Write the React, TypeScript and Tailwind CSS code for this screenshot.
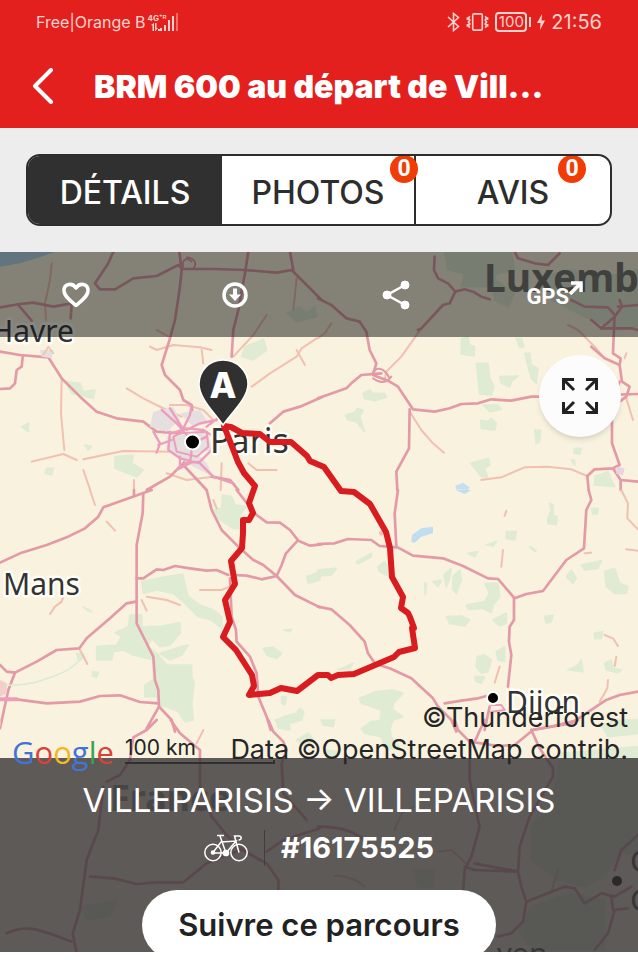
import React from "react";

const MAJOR = "#e39aa6";
const MINOR = "#f2c0b0";
const CITY = "#ec9dbb";
const FOREST = "#dfebd3";

type TileProps = {
  x: number;
  y: number;
  forest?: string[];
  major?: string[];
  minor?: string[];
  children?: React.ReactNode;
};

function Tile({ x, y, forest = [], major = [], minor = [], children }: TileProps) {
  return (
    <g transform={`translate(${x} ${y}) scale(0.3333)`} fill="none" strokeLinejoin="round" strokeLinecap="round">
      {forest.map((d) => (
        <path key={d} d={d} fill={FOREST} stroke={FOREST} strokeWidth="5" />
      ))}
      {minor.map((d) => (
        <path key={d} d={d} stroke={MINOR} strokeWidth="6" />
      ))}
      {major.map((d) => (
        <path key={d} d={d} stroke={MAJOR} strokeWidth="8" />
      ))}
      {children}
    </g>
  );
}

function MapCanvas() {
  return (
    <svg
      className="absolute inset-0 h-full w-full bg-[#f8f2df]"
      viewBox="0 252 638 700"
      preserveAspectRatio="xMidYMin slice"
      fontFamily="'Noto Sans', 'Open Sans', sans-serif"
      aria-hidden="true"
    >
      <rect x="-200" y="252" width="1038" height="700" fill="#f8f2df" />

      <Tile
        x={0}
        y={250}
        forest={[
          "M735 290L790 268L800 300L760 330L725 320Z",
          "M345 620L400 615L395 640L430 660L410 680L345 655Z",
          "M195 395L240 400L250 425L285 420L280 445L215 430Z",
          "M860 190L900 170L920 190L945 170L950 200L890 215Z",
          "M65 530L85 520L85 545Z",
          "M140 655L160 655L155 675L135 670Z",
          "M255 585L275 590L265 600Z",
        ]}
        minor={[
          "M155 40L150 90L135 160L138 210",
          "M95 635L190 612L230 630",
          "M185 385L183 490L193 600",
          "M250 628L370 603L520 605",
          "M380 415L430 445L500 480L545 500",
          "M450 290L470 300L520 285L600 292L635 300",
          "M605 300L610 340",
          "M700 320L760 255L800 195",
          "M755 410L810 370L890 320L905 295L950 265",
          "M890 300L915 345",
          "M250 660L270 718",
          "M402 690L402 720",
          "M510 465L560 465L610 480L640 510",
          "M745 640L770 660L830 660",
          "M665 640L662 720",
          "M500 670L560 690L640 680",
          "M470 240L510 262",
          "M890 85L880 180",
        ]}
        major={[
          "M340 5L325 40L285 100L300 118L345 118L400 85L470 78L535 45L548 57L640 57L735 60L830 68L875 60L910 95L965 150",
          "M0 172L60 162L100 158L160 170L215 160L212 205",
          "M55 165L95 212",
          "M538 5L545 60L540 110L525 210L510 265L485 345L495 375L540 420L550 450L575 465L578 495",
          "M745 5L735 70L715 180L700 240L695 320",
          "M870 5L880 60",
          "M0 305L60 315L145 322L185 385L240 440L290 485L350 505L430 515L470 545L540 550",
          "M68 322L65 350L50 360L45 400L30 415L0 417",
          "M810 520L850 485L900 470L965 442",
          "M440 720L510 680L550 640L575 610",
          "M550 645L620 720",
          "M635 680L690 690L715 720",
        ]}
      >
        <path d="M-10 0H180L120 22L60 40L-10 52Z" fill="#b4d8ee" />
        <path d="M460 485L520 470L540 510L500 545L450 530ZM540 490L600 480L625 520L580 530ZM500 560L620 545L640 600L590 610L620 640L640 680L580 650L500 600ZM120 300L160 300L155 325L125 320Z" fill="#e6dfe0" />
        <path d="M575 35C560 20 545 30 550 50M560 22C590 25 590 45 580 55" stroke={MAJOR} strokeWidth="5" />
        <path d="M130 315L145 290L160 310" stroke={MINOR} strokeWidth="5" />
        <path
          d="M485 480L530 520L560 555M510 475L545 530M460 545L480 580L470 608M475 585L515 570M510 545L505 600L540 625L600 640M515 550L560 535L610 540L640 560L635 600L600 635L550 640M560 540L600 520L650 510M575 465L570 495L545 545M600 640L640 680L700 700M620 530L660 500M540 620L540 650M575 600L570 640L530 660M620 560L600 570"
          stroke={CITY}
          strokeWidth="7"
        />
        <path d="M520 560L540 550L620 545L625 590L590 620L530 605Z" stroke={CITY} strokeWidth="6" />
      </Tile>

      <Tile
        x={318}
        y={250}
        forest={[
          "M380 5H580L590 60L540 70L510 110L430 110L440 70L390 60Z",
          "M520 80L590 130L570 170L530 150Z",
          "M430 265L450 260L455 285L470 290L468 318L430 312Z",
          "M475 340L510 340L515 385L528 410L520 435L485 432Z",
          "M595 265L610 265L618 290L605 292Z",
          "M620 310L635 310L640 345L660 355L655 400L640 385Z",
          "M545 380L600 378L580 395L575 410L550 400Z",
          "M135 430L155 420L165 430L200 430L205 442L170 452L140 445Z",
          "M82 495L110 488L118 475L135 480L125 500L140 545L115 515L90 510Z",
          "M495 465L540 465L550 478L515 485Z",
          "M488 510L510 515L520 505L535 520L530 540L490 535Z",
          "M650 540L668 540L665 575L655 580Z",
          "M770 595L790 595L785 612L768 610Z",
          "M458 640L512 625L515 645L500 655L510 685L490 680Z",
          "M830 680L870 665L880 690L890 710L830 705Z",
          "M760 630L770 630L770 645Z",
          "M660 80L760 60L860 80L960 60V230L900 240L800 200L700 150Z",
        ]}
        minor={[
          "M40 220L20 250L0 265",
          "M310 235L250 320L205 365L200 390",
          "M275 485L310 540L345 580L378 608",
          "M490 690L550 682L620 652L690 650L760 658L808 678",
          "M925 445L945 510",
          "M750 225L780 240L830 290L860 325",
          "M925 310L920 325",
        ]}
        major={[
          "M350 20L348 60L360 85L390 100L412 125L440 118L465 125L490 140L515 148",
          "M412 125L395 160L375 165L310 235L300 240",
          "M0 145L40 165L85 205L125 215L145 245L155 300L175 340L165 375L210 392L240 410L270 455L285 478L350 485L395 475L430 462L480 460L520 448L580 452L640 440L700 440L960 432",
          "M0 445L85 415L100 400L130 375L190 370",
          "M275 478L273 595L235 665L238 720",
          "M590 5L600 25L650 40L690 45L725 10",
          "M760 150L800 170L870 172L890 195L885 310L908 325L905 345L912 395L935 410L925 440L905 455",
          "M820 290L860 325L905 345",
          "M905 150L912 170L890 200L850 235M820 210L850 235L940 235L960 240M900 170L960 165",
          "M905 395L882 460L882 580L905 645L885 655L830 658L808 678L812 720",
          "M885 655L908 690L960 695M908 690V720",
        ]}
      >
        <path d="M162 372C175 345 200 355 215 385M165 385C185 400 205 400 220 380" stroke={MAJOR} strokeWidth="6" />
        <path d="M412 708L435 698L455 712L450 720L415 718Z" fill="#c4dff0" />
        <path d="M895 650L920 655L915 675L895 672Z" fill="#e9d3df" />
      </Tile>

      <Tile
        x={0}
        y={490}
        forest={[
          "M668 15L695 20L705 45L738 50L720 75L730 115L700 115L660 90L640 60L665 55Z",
          "M425 275L500 260L548 252L555 285L565 320L600 345L640 360L665 380L665 415L635 390L595 380L560 345L520 310L470 300L430 310Z",
          "M290 470L350 465L365 440L345 428L385 410L390 375L425 375L425 410L450 415L460 440L440 470L470 490L500 525H575V560L582 580L575 640L580 690L555 695L535 665L500 650L485 650L470 620L435 620L435 585L460 570L460 510L400 495L370 480L340 485L335 510H290Z",
          "M440 410L480 410L540 398L540 430L510 465L480 470L450 440Z",
          "M480 490L545 470L565 465L545 495L510 510Z",
          "M790 475L820 472L845 490L830 505L800 495Z",
          "M850 420L875 418L870 425Z",
          "M920 260L960 245V270L925 280Z",
          "M830 690L850 680L890 670L900 655L912 665L905 690L870 700L835 715Z",
          "M845 620L860 620L855 645L845 640Z",
          "M278 545L295 548L290 562L278 558Z",
          "M250 350L275 365L260 360Z",
          "M230 490L250 490L255 505L235 510Z",
        ]}
        minor={[
          "M270 0L285 45",
          "M320 95L345 122",
          "M150 372L165 350L185 335L190 320",
          "M440 320L500 330L540 345",
          "M600 300L665 300L690 290",
          "M240 480L262 522",
          "M640 30L650 55",
          "M425 330L440 362",
        ]}
        major={[
          "M455 0L405 18L310 52L295 80L255 115L200 142L140 165L65 188L0 218",
          "M402 0L402 18",
          "M430 10L428 70L410 165L410 400L435 450L460 500L465 570L475 600L477 650L440 715",
          "M477 650L515 690L525 725",
          "M410 265L430 265L470 238L490 240L525 228L570 235L620 242L650 240L685 255",
          "M408 335L380 340L330 385L260 445L238 475L170 480L110 515L45 548L25 600L0 715",
          "M0 525L20 545L45 548",
          "M0 628L50 628L140 640L240 635L300 618L360 616L420 636L475 640",
          "M620 0L635 60L665 120L720 175L760 210L790 225L830 258L885 315L960 352",
          "M710 0L745 45L770 75L800 97L840 98L870 120L895 152L930 167L965 163",
          "M893 152L858 190L845 225L830 258L785 268L740 257L700 255",
          "M690 265L695 380L708 420L710 455L750 500L770 550L775 620L800 680L812 720",
        ]}
      >
        <path d="M0 585C90 590 130 570 170 555C200 545 220 530 240 510" stroke="#dcead8" strokeWidth="5" />
        <path d="M0 570L20 580L20 610L0 620Z" fill="#f3cfc9" />
        <path d="M0 628H50" stroke={CITY} strokeWidth="12" />
      </Tile>

      <Tile
        x={318}
        y={490}
        forest={[
          "M0 240L55 235L40 255L0 258Z",
          "M115 215L160 190L160 200L120 222Z",
          "M180 230L200 215L215 240L215 260L185 245Z",
          "M378 255L400 235L395 265L385 290Z",
          "M405 260L425 240L430 270L415 310L405 300Z",
          "M320 280L325 280L322 315Z",
          "M345 275L370 270L360 290Z",
          "M385 380L430 378L455 390L440 408L395 400Z",
          "M445 345L500 335L515 310L500 280L540 280L545 320L525 345L520 368L495 355L450 358Z",
          "M525 390L565 370L565 400L545 408Z",
          "M565 125L595 125L590 150L565 145Z",
          "M505 165L535 155L525 168Z",
          "M450 190L480 185L470 200Z",
          "M690 85L700 60L695 40L705 45L705 75L718 80L715 105L690 100Z",
          "M820 55L840 55L838 72L825 72Z",
          "M745 260L760 240L775 265L765 280Z",
          "M790 225L850 212L840 235L800 240Z",
          "M860 245L890 235L905 280L930 290L925 310L890 310L865 290Z",
          "M635 170L655 180L650 185Z",
          "M680 380L705 375L700 395L685 400Z",
          "M830 430L855 425L850 445L830 445Z",
          "M860 520L880 510L885 535L910 540L900 548L865 540Z",
          "M478 500L500 495L520 510L510 545L490 550L475 530Z",
          "M535 485L560 470L560 515L540 510Z",
          "M470 560L500 560L490 580L475 575Z",
          "M125 625L175 605L225 600L255 610L225 640L225 660L255 680L225 690L215 720L185 700L190 660L130 640Z",
          "M60 540L105 520L95 535Z",
          "M750 540L780 525L790 510L795 545Z",
          "M10 690L50 690L45 710L15 705Z",
        ]}
        minor={[
          "M555 180L550 230",
          "M910 0L930 40L928 85L960 118",
          "M925 178L960 182",
          "M800 190L820 188",
          "M860 435L885 445L900 468",
          "M895 500L890 528",
          "M870 570L868 595L845 635",
          "M545 530L530 578",
          "M560 78L565 62",
        ]}
        major={[
          "M240 0L230 70L235 170L285 197L375 205L435 228L510 265L540 267L590 325L625 312L675 303L745 210L798 175L805 60L820 30L812 0",
          "M588 325L588 390L575 410L573 455L580 495L570 590",
          "M0 162L50 160L90 147L160 150L185 168L235 172",
          "M0 350L40 358L95 405L140 455L150 490L172 522L215 535L280 565L345 625L360 650",
          "M380 640L430 632L480 625L530 612",
          "M360 650L400 690L415 725",
          "M515 650L500 720",
          "M960 605L905 615L865 630L820 660L760 700L640 720",
        ]}
      >
        <path d="M282 135L310 115L345 110L345 130L310 140L290 158L280 155ZM412 0H460L440 12Z" fill="#c0def0" />
        <path d="M520 645L550 645L560 660L520 665" stroke={CITY} strokeWidth="6" />
        <circle cx="190" cy="130" r="7" fill={MINOR} />
      </Tile>

      <Tile
        x={0}
        y={720}
        forest={["M825 0L865 0L870 30L840 25Z", "M890 60L925 40L940 60L920 80Z", "M250 560L350 540L330 590L260 600Z"]}
        minor={["M610 30L590 70", "M0 0L0 15"]}
        major={[
          "M470 0L440 30L400 52L390 120L360 165L320 185",
          "M512 0L540 40L600 90L600 200L635 290L680 345L720 385L780 420",
          "M805 0L820 35L850 65L860 90L845 130L850 220L920 300",
          "M310 200L295 330L260 420L240 570L218 640L230 700",
          "M270 470L340 475L410 492L470 487L550 487L620 430L720 390",
          "M800 395L850 360L960 325",
          "M720 385L800 430L835 480L835 520",
          "M20 640C80 610 120 630 215 665",
        ]}
      />

      <Tile
        x={318}
        y={720}
        forest={[
          "M130 25L160 5L210 0L220 50L250 90L200 85L190 50L140 40Z",
          "M640 320L700 250L730 100L960 80V400L900 400L860 470L800 500L720 480L640 420Z",
          "M850 15L900 0L960 0V40L870 50Z",
          "M20 90L60 95L55 110H25Z",
          "M640 560L760 520L860 540V690H640L600 620Z",
          "M290 450L350 450L345 500L300 500Z",
        ]}
        minor={[
          "M230 330L250 280L290 260",
          "M360 395L400 390L450 435",
          "M50 468C80 465 120 480 140 500",
          "M700 515L720 450",
        ]}
        major={[
          "M410 0L420 30L455 65L455 180L485 320L460 410L440 450L435 520",
          "M500 0L470 65M455 65L540 78L590 75L645 30L700 20L780 0",
          "M640 30L665 85L705 145L705 170L635 290L605 380L600 455L470 430",
          "M440 440L470 450L600 455L610 500L625 545L615 605L580 640L540 650",
          "M625 545L700 515L740 500L770 505L800 550L850 520L890 530L940 500",
          "M960 345L910 390L890 450",
          "M880 530L885 570L930 565M890 570L870 640L830 690",
          "M0 320C80 320 120 340 150 370",
        ]}
      />

      <g fill="#333" stroke="#fffdf6" strokeWidth="5" strokeLinejoin="round" paintOrder="stroke">
        <text x="-9" y="342" fontSize="30">Havre</text>
        <text x="3" y="595" fontSize="30">Mans</text>
        <text x="210" y="453" fontSize="34">Paris</text>
        <text x="506" y="713" fontSize="30">Dijon</text>
      </g>
      <g fill="#444">
        <text x="630" y="872" fontSize="31">G</text>
        <text x="630" y="911" fontSize="31">G</text>
        <text x="497" y="964" fontSize="29">yon</text>
      </g>
      <text x="484" y="292" fontSize="39" fontWeight="700" fill="#70706e">Luxembourg</text>
      <text x="110" y="811" fontSize="36" fontWeight="700" fill="#8a8a88">France</text>
      <g stroke="#fff" strokeWidth="2">
        <circle cx="192.500" cy="442" r="7.500" fill="#000" />
        <circle cx="493" cy="698" r="6" fill="#000" />
        <circle cx="617" cy="881" r="5" fill="#000" stroke="none" />
      </g>

      <path
        d="M224 426L238 462L244 473L255 486L249 503L253 513L249 520L243 520L243 533L242 548L231 561L235 584L225 600L230 622L223 637L236 650L252 675L254 686L249 695L270 693L281 688L297 691L318 675L328 675L331 678L338 675L354 674L394 657L399 652L415 648L412 628L414 628L410 617L408 613L401 608L403 597L392 577L390 548L386 532L370 504L354 492L341 491L324 467L310 461L307 456L291 442L270 442L260 434L242 433L231 427Z"
        fill="none"
        stroke="#d91c20"
        strokeWidth="6"
        strokeLinejoin="round"
      />

      <path
        d="M223 360C209 360 199 371 199 384C199 398 214 412 223 425C232 412 248 398 248 384C248 371 237 360 223 360Z"
        fill="#303030"
        stroke="#fff"
        strokeWidth="1.500"
      />
      <text x="223" y="398" fontFamily="Inter, sans-serif" fontSize="35" fontWeight="800" textAnchor="middle" fill="#fff">
        A
      </text>
    </svg>
  );
}

function StatusBar() {
  return (
    <div className="flex h-11 items-center justify-between pr-9 pl-9 text-[#fbd3cd]">
      <div className="flex items-center gap-0.5">
        <span className="text-[16px] leading-5">Free|Orange B</span>
        <span className="flex items-end">
          <span className="flex flex-col items-start">
            <span className="text-[8px] leading-[10px] font-bold">4G⁺ᴿ</span>
            <svg width="12" height="8" viewBox="0 0 12 8" fill="currentColor" aria-hidden="true">
              <path d="M3 2L6 0V8H4.500V2.500ZM7 0H8.500V5L10 5L7.500 8L7 8ZM10 6H12V8H10Z" />
            </svg>
          </span>
          <svg className="-ml-1.5" width="18" height="18" viewBox="0 0 18 18" fill="currentColor" aria-hidden="true">
            <path d="M0 15H2V18H0ZM4 12H6V18H4ZM8 7H10V18H8ZM12 3H14V18H12Z" />
            <path d="M16 0H18V18H16Z" opacity="0.45" />
          </svg>
        </span>
      </div>
      <div className="flex items-center gap-1.5">
        <svg width="13" height="20" viewBox="0 0 13 20" fill="none" stroke="currentColor" strokeWidth="1.600" aria-label="Bluetooth">
          <path d="M1 5L11.500 14.500L6.500 18.500V1.500L11.500 5.500L1 15" />
        </svg>
        <svg width="23" height="20" viewBox="0 0 24 20" fill="none" stroke="currentColor" strokeWidth="1.700" aria-label="Vibreur">
          <rect x="7" y="1.500" width="10" height="17" rx="1.500" />
          <path d="M4 4L2.500 6L4 8L2.500 10L4 12L2.500 14L4 16M1.500 5V8M1.500 12V15M20 4L21.500 6L20 8L21.500 10L20 12L21.500 14L20 16M22.500 5V8M22.500 12V15" />
        </svg>
        <span className="flex items-center gap-0.5">
          <span className="flex h-5 w-8 items-center justify-center rounded border-2 border-current text-[15px] leading-4">100</span>
          <span className="h-2.5 w-0.5 bg-current" />
        </span>
        <svg width="8" height="16" viewBox="0 0 8 16" fill="currentColor" aria-label="En charge">
          <path d="M5 0L0 9H3.500L3 16L8 6.500H4.500Z" />
        </svg>
        <span className="text-[20px] leading-6">21:56</span>
      </div>
    </div>
  );
}

function Badge({ count, place }: { count: number; place: string }) {
  return (
    <span
      className={`absolute -top-px flex h-7 w-7 items-center justify-center rounded-full bg-[#f23c06] font-['Roboto',sans-serif] text-[23px] leading-7 font-bold text-white ${place}`}
    >
      {count}
    </span>
  );
}

function Tabs() {
  return (
    <nav className="shrink-0 bg-[#ededed] p-[26px]">
      <div className="grid h-[72px] grid-cols-3 overflow-hidden rounded-[14px] border-2 border-[#2d2d2d] bg-white text-[32px] leading-9 font-medium text-[#2d2d2d]">
        <button className="bg-[#303030] pt-1.5 text-white">DÉTAILS</button>
        <button className="relative border-r-2 border-[#2d2d2d] pt-1.5">
          PHOTOS
          <Badge count={0} place="-right-1" />
        </button>
        <button className="relative pt-1.5">
          AVIS
          <Badge count={0} place="right-6" />
        </button>
      </div>
    </nav>
  );
}

function Toolbar() {
  return (
    <div className="relative grid h-[85px] shrink-0 grid-cols-4 place-items-center bg-[#0f1110]/50 pr-1 text-white">
      <button className="pr-1.5" aria-label="Favori">
        <svg width="28" height="26" viewBox="0 0 28 26" fill="none" stroke="currentColor" strokeWidth="3.500" strokeLinejoin="round">
          <path d="M14 23.500C8 18.500 2 14 2 8.500C2 2 10 0 14 6C18 0 26 2 26 8.500C26 14 20 18.500 14 23.500Z" />
        </svg>
      </button>
      <button className="pr-1.5" aria-label="Télécharger">
        <svg width="26" height="26" viewBox="0 0 26 26" fill="none" stroke="currentColor">
          <circle cx="13" cy="13" r="11" strokeWidth="3.500" />
          <path d="M13 6.500V13" strokeWidth="4" />
          <path d="M7 12.500H19L13 19Z" fill="currentColor" stroke="none" />
        </svg>
      </button>
      <button aria-label="Partager">
        <svg width="28" height="30" viewBox="0 0 28 30" fill="currentColor" stroke="currentColor">
          <path d="M23 5L5 15L23 25" fill="none" strokeWidth="2.500" />
          <circle cx="23" cy="5" r="4" />
          <circle cx="5" cy="15" r="4" />
          <circle cx="23" cy="25" r="4" />
        </svg>
      </button>
      <button className="flex items-start" aria-label="GPS">
        <span className="pt-1 font-['Roboto',sans-serif] text-[22px] leading-6 font-bold">GPS</span>
        <svg width="14" height="14" viewBox="0 0 14 14" fill="none" stroke="currentColor" strokeWidth="3.500">
          <path d="M1 13L12 2M2 2H12V11" />
        </svg>
      </button>
    </div>
  );
}

function MapArea() {
  return (
    <div className="relative z-10 flex h-[421px] shrink-0 flex-col">
      <button
        className="mt-[18px] mr-[17px] flex h-[82px] w-[82px] items-center justify-center self-end rounded-full bg-[#fcfcfc] shadow-md"
        aria-label="Plein écran"
      >
        <svg width="36" height="36" viewBox="0 0 36 36" fill="none" stroke="#222" strokeWidth="3">
          <path d="M1.500 12V1.500H12M2 2L12 12M24 1.500H34.500V12M34 2L24 12M1.500 24V34.500H12M2 34L12 24M24 34.500H34.500V24M34 34L24 24" />
        </svg>
      </button>
      <div className="absolute inset-x-0 -bottom-2 flex items-end pr-2.5 pl-3">
        <span className="w-[113px] font-['Open_Sans',sans-serif] text-[31px] leading-7 font-medium">
          <span className="text-[#4274d6]">G</span>
          <span className="text-[#d8423a]">o</span>
          <span className="text-[#f1b91f]">o</span>
          <span className="text-[#4274d6]">g</span>
          <span className="text-[#35a357]">l</span>
          <span className="text-[#d8423a]">e</span>
        </span>
        <span className="w-[150px] pb-0.5 text-[21px] leading-6 whitespace-nowrap text-[#222]">
          100 km
          <span className="block h-1 border-r-2 border-b-2 border-[#303030]" />
        </span>
        <p className="absolute right-2.5 bottom-0 text-right text-[27px] leading-8 text-[#262626]">
          ©Thunderforest
          <br />
          Data ©OpenStreetMap contrib.
        </p>
      </div>
    </div>
  );
}

function Bike() {
  return (
    <svg width="44" height="28" viewBox="0 0 44 28" fill="none" stroke="currentColor" strokeWidth="1.500" aria-label="Vélo">
      <circle cx="9" cy="18.500" r="8.200" />
      <circle cx="35" cy="18.500" r="8.200" />
      <circle cx="9" cy="18.500" r="1.600" fill="currentColor" />
      <circle cx="22" cy="19" r="2.600" fill="currentColor" />
      <path d="M9 18.500L17 8L32 7L22 19L16 2M22 19H9M13 1.500H20M35 18.500L30.500 2H35C38 2 38 6 34.500 6" />
    </svg>
  );
}

function RoutePanel() {
  return (
    <div className="relative flex min-h-0 flex-1 flex-col items-center bg-[#363335]/80 pt-6 text-white">
      <h2 className="text-[33px] leading-9 font-normal whitespace-nowrap">VILLEPARISIS → VILLEPARISIS</h2>
      <div className="mt-3 flex h-10 items-center gap-4">
        <Bike />
        <span className="h-9 w-px bg-[#403e3d]" />
        <span className="text-[29px] leading-8 font-bold">#16175525</span>
      </div>
      <button className="mt-6 h-[70px] w-[354px] shrink-0 rounded-full bg-white text-[31px] leading-9 font-semibold text-[#222]">
        Suivre ce parcours
      </button>
    </div>
  );
}

export default function App() {
  return (
    <main className="flex h-screen flex-col overflow-hidden bg-white font-['Inter',sans-serif]">
      <header className="h-32 shrink-0 bg-[#e4201f]">
        <StatusBar />
        <div className="flex h-[84px] items-center pl-8 text-white">
          <button className="w-[62px]" aria-label="Retour">
            <svg width="22" height="36" viewBox="0 0 22 36" fill="none" stroke="currentColor" strokeWidth="4" strokeLinecap="round" strokeLinejoin="round">
              <path d="M19 2L3 18L19 34" />
            </svg>
          </button>
          <h1 className="pt-0.5 text-[32px] leading-10 font-black whitespace-nowrap">BRM 600 au départ de Vill...</h1>
        </div>
      </header>
      <Tabs />
      <section className="relative mb-2 flex min-h-0 flex-1 flex-col overflow-hidden">
        <MapCanvas />
        <Toolbar />
        <MapArea />
        <RoutePanel />
      </section>
    </main>
  );
}
